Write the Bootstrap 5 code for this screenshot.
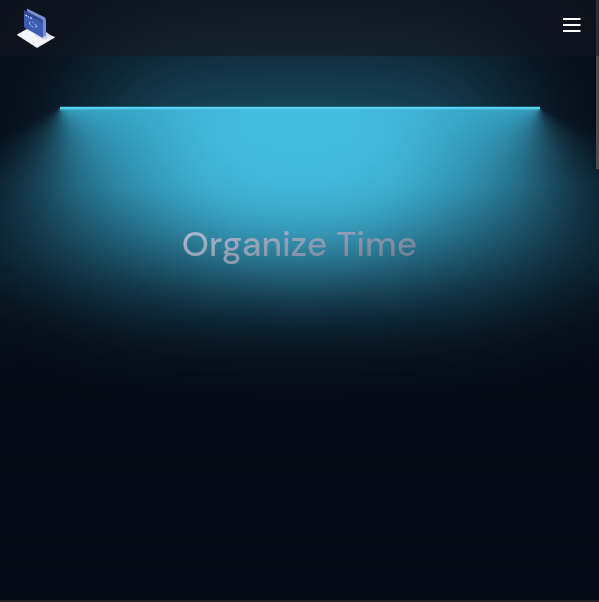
<!DOCTYPE html>
<html lang="en">
<head>
<meta charset="utf-8">
<meta name="viewport" content="width=device-width, initial-scale=1">
<title>Organize Time</title>
<link href="https://cdn.jsdelivr.net/npm/bootstrap@5.3.0/dist/css/bootstrap.min.css" rel="stylesheet">
<style>
:root { --night: #050a14; --lamp: #3db4d8; --lamp-bright: #4bc5e6; }
body { background: var(--night); font-family: "DM Sans", Inter, "Liberation Sans", sans-serif; }
.page-shell { border-bottom: 2px solid #222224; }
.top-bar { min-height: 56px; margin-bottom: -56px; background: rgba(20, 24, 32, .55); z-index: 20; }
.logo svg, .top-bar button svg { display: block; }

/* Lamp: every layer shares one grid cell and is shifted from its centre */
.hero { display: grid; grid-template-rows: 496px 1fr; overflow: hidden; }
.lamp, .hero-copy { grid-area: 1 / 1; }
.lamp { display: grid; grid-template-columns: 100%; place-items: center; transform: scaleY(1.25); }
.lamp > * { grid-area: 1 / 1; }
/* The halves overlap by a few pixels so that no seam shows at odd widths */
.cone {
  width: 100%; height: 224px;
  background:
    conic-gradient(from 70deg at calc(100% - 242px) 0, var(--lamp), var(--night) 50%, var(--night)) left / calc(50% + 2px) 100% no-repeat,
    conic-gradient(from 290deg at 242px 0, var(--night), var(--night) 50%, var(--lamp)) right / calc(50% + 2px) 100% no-repeat;
}
.cone-fade { width: 100%; height: 160px; transform: translateY(32px); background: linear-gradient(to top, var(--night), transparent); }
.floor { width: 150%; height: 192px; transform: translateY(144px); background: var(--night); filter: blur(40px); }
.core { width: 256px; height: 144px; transform: translateY(-96px); border-radius: 50rem; background: var(--lamp-bright); filter: blur(40px); }
.ceiling { width: 100%; height: 176px; transform: translateY(-200px); background: var(--night); }
.halo { width: 448px; height: 144px; transform: translateY(-72px); border-radius: 50rem; background: var(--lamp); opacity: .5; filter: blur(64px); }
.tube { width: 480px; height: 2px; transform: translateY(-112px); background: #55d2f0; }

.hero-copy { z-index: 5; padding-bottom: 8px; }
.hero-title {
  font-size: 35px; line-height: 48px; font-weight: 500;
  background: linear-gradient(to bottom right, #b9c4d6, #66758d);
  -webkit-background-clip: text; background-clip: text; color: transparent;
}
.scroll-thumb { width: 3px; height: 28vh; background: #4b4b4d; z-index: 10; }
</style>
<script src="https://cdn.jsdelivr.net/npm/bootstrap@5.3.0/dist/js/bootstrap.bundle.min.js"></script>
</head>
<body>
<div class="page-shell d-flex flex-column min-vh-100 position-relative overflow-hidden">
  <nav class="navbar top-bar sticky-top d-flex justify-content-between py-0 px-3" aria-label="Main">
    <a class="logo" href="#" aria-label="Home">
      <svg width="40" height="40" viewBox="0 0 40 40">
        <path d="M1 27 13 20 39 29.500 21 40z" fill="#dfe3ef"/>
        <path d="M1 26.500 13 20 39 29 21 39z" fill="#f4f5fb"/>
        <path d="M18 27 30 24 36 28 28 32z" fill="#d3dbf0"/>
        <path d="M11 0.500 28 9Q30 10 30 12V28L27 29 11 19z" fill="#7590d4"/>
        <path d="M8 2 25 11Q27 12 27 14V30L9 20Q8 19 8 18z" fill="#3e5cb2"/>
        <path d="M8 2 26 11.500 27 15 8 6z" fill="#304b94"/>
        <path d="M9.500 7 11 8M12 8.500 13 9M14 9.500 16 10.500" stroke="#d8e1ff" stroke-width="1.200"/>
        <path d="m15 14-2 1 2 2.500m4-1.500 2 2.500-2 .5m-2.500-4.500 1 .5m-2 3.500 1.500.5" fill="none" stroke="#a9bdf3" stroke-width="1"/>
      </svg>
    </a>
    <button class="btn border-0 p-0" type="button" aria-label="Open menu">
      <svg width="24" height="30" viewBox="0 0 24 30"><path d="M4 6h17.500M4 12h17.500M4 18h17.500" stroke="#fff" stroke-width="2"/></svg>
    </button>
  </nav>
  <main class="hero flex-grow-1">
    <div class="lamp" aria-hidden="true">
      <div class="cone"></div>
      <div class="floor"></div>
      <div class="cone-fade"></div>
      <div class="core"></div>
      <div class="ceiling"></div>
      <div class="halo"></div>
      <div class="tube"></div>
    </div>
    <div class="hero-copy d-flex align-items-center justify-content-center">
      <h1 class="hero-title mb-0 text-center">Organize Time</h1>
    </div>
  </main>
  <div class="scroll-thumb position-absolute top-0 end-0" aria-hidden="true"></div>
</div>
</body>
</html>
